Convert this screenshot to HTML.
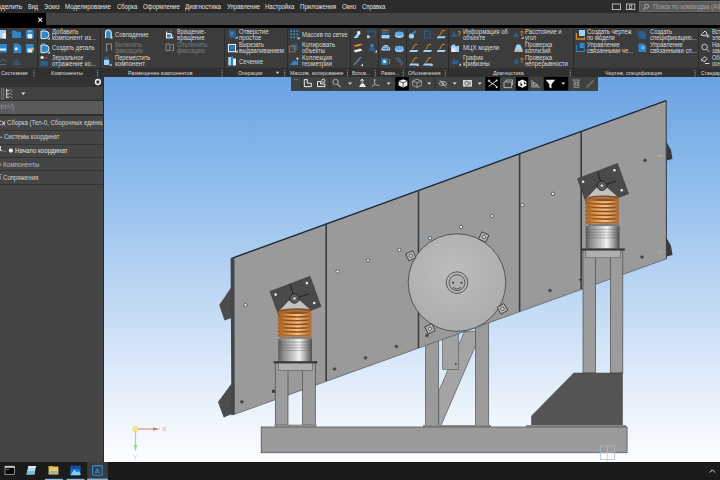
<!DOCTYPE html>
<html><head><meta charset="utf-8">
<style>
html,body{margin:0;padding:0;background:#000;}
body{width:720px;height:480px;position:relative;overflow:hidden;font-family:"Liberation Sans",sans-serif;color:#e8e8e8;}
.abs{position:absolute;}
.t{position:absolute;white-space:nowrap;line-height:1.15;transform-origin:0 50%;}
#menubar{left:0;top:0;width:720px;height:13.3px;background:#2c2c2c;}
#tabrow{left:0;top:13.3px;width:720px;height:11.5px;background:#444444;}
#tab{left:0;top:13.3px;width:46px;height:12px;background:#000;}
#blackline{left:0;top:24.7px;width:720px;height:2.8px;background:#000;}
#ribbon{left:0;top:27.5px;width:720px;height:40.5px;background:#3c3c3c;}
#riblabels{left:0;top:68px;width:720px;height:9.2px;background:#303030;}
#viewport{left:103px;top:77px;width:617px;height:385px;background:linear-gradient(#6aa2e2 0%,#8cbbec 25.5%,#bed8f4 56.6%,#eef4fc 87.8%,#fcfdff 100%);}
#leftpanel{left:0;top:77px;width:102.5px;height:385px;background:#454545;border-right:1px solid #2a2a2a;}
#taskbar{left:0;top:461.8px;width:720px;height:18.2px;background:#1b1b1b;}
#viewtb{left:291px;top:77px;width:307px;height:13.6px;background:#3e4240;}
#search{left:639.2px;top:1.3px;width:81px;height:11.2px;background:#5a5a5a;box-shadow:inset 0 0 0 0.6px #777;}
.sep{position:absolute;top:27.5px;width:1px;height:49.5px;background:#2a2a2a;}
.prow{position:absolute;left:0;width:102.5px;}
</style></head><body>
<div id="menubar" class="abs"></div>
<div id="tabrow" class="abs"></div>
<div id="tab" class="abs"></div>
<div id="blackline" class="abs"></div>
<div id="ribbon" class="abs"></div>
<div id="riblabels" class="abs"></div>
<div id="search" class="abs"></div>
<div class="sep" style="left:37.2px"></div><div class="sep" style="left:100px"></div><div class="sep" style="left:224px"></div><div class="sep" style="left:287px"></div><div class="sep" style="left:350.3px"></div><div class="sep" style="left:378.3px"></div><div class="sep" style="left:406.3px"></div><div class="sep" style="left:448px"></div><div class="sep" style="left:573px"></div><div class="sep" style="left:697.5px"></div>
<div id="viewport" class="abs"></div>
<svg id="model" class="abs" style="left:0;top:0" width="720" height="480" viewBox="0 0 720 480">
<defs>
<linearGradient id="cup" x1="0" x2="1" y1="0" y2="0">
<stop offset="0" stop-color="#5a5a5a"/><stop offset="0.15" stop-color="#8e8e8e"/><stop offset="0.45" stop-color="#c9c9c9"/><stop offset="0.62" stop-color="#f2f2f2"/><stop offset="0.8" stop-color="#a8a8a8"/><stop offset="1" stop-color="#4e4e4e"/>
</linearGradient>
<linearGradient id="spr" x1="0" x2="1" y1="0" y2="0">
<stop offset="0" stop-color="#a8601f"/><stop offset="0.3" stop-color="#e39a4c"/><stop offset="0.6" stop-color="#f3c08a"/><stop offset="1" stop-color="#b66a25"/>
</linearGradient>
<radialGradient id="disc" cx="0.45" cy="0.4" r="0.7">
<stop offset="0" stop-color="#bdbdbd"/><stop offset="1" stop-color="#aaaaaa"/>
</radialGradient>
<g id="hole"><circle r="1.7" fill="#e6eef8" stroke="#46525e" stroke-width="0.9"/></g>
<g id="bolt"><circle r="1.6" fill="#3a3a3a" stroke="#6e6e6e" stroke-width="0.6"/></g>
<g id="sqb"><rect x="-3.9" y="-3.9" width="7.8" height="7.8" fill="#b4b4b4" stroke="#333" stroke-width="0.8"/><circle r="1.7" fill="#d4d4d4" stroke="#333" stroke-width="0.7"/></g>
<!-- spring assembly; local origin = pivot of left one (294.4,298.5) -->
<g id="assy">
 <polygon points="270,291.5 310,276.25 321,306.5 281,321.75" fill="#4a4a4a" stroke="#2e2e2e" stroke-width="0.5"/>
 <polygon points="289,300.5 299.8,300.5 311.2,310.6 279.6,310.6" fill="#c2c2c2"/>
 <line x1="294.4" y1="298.5" x2="290.2" y2="284.2" stroke="#1c1c1c" stroke-width="0.9"/>
 <line x1="294.4" y1="298.5" x2="309" y2="294" stroke="#1c1c1c" stroke-width="0.9"/>
 <circle cx="294.4" cy="298.5" r="4.7" fill="#606060" stroke="#1c1c1c" stroke-width="0.9"/>
 <circle cx="294.4" cy="298.5" r="1.9" fill="#d0d0d0" stroke="#222" stroke-width="0.7"/>
 <circle cx="275.6" cy="294.6" r="1.3" fill="#e4ecf6"/><circle cx="306.9" cy="283.1" r="1.3" fill="#e4ecf6"/><circle cx="314.2" cy="303" r="1.3" fill="#e4ecf6"/>
 <rect x="281.5" y="310.6" width="29.4" height="27" fill="#a56a34"/>
 <g fill="none" stroke="#8a4c18" stroke-width="1.6"><path d="M280.90000000000003 311.6 A15.2 2.0 0 0 1 311.3 310.8"/><path d="M280.90000000000003 315.35 A15.2 2.0 0 0 1 311.3 314.55"/><path d="M280.90000000000003 319.1 A15.2 2.0 0 0 1 311.3 318.3"/><path d="M280.90000000000003 322.85 A15.2 2.0 0 0 1 311.3 322.05"/><path d="M280.90000000000003 326.6 A15.2 2.0 0 0 1 311.3 325.8"/><path d="M280.90000000000003 330.35 A15.2 2.0 0 0 1 311.3 329.55"/><path d="M280.90000000000003 334.1 A15.2 2.0 0 0 1 311.3 333.3"/></g>
 <g fill="none" stroke="url(#spr)" stroke-width="2.1"><path d="M280.90000000000003 311.6 A15.2 2.0 0 0 0 311.3 313.8"/><path d="M280.90000000000003 315.35 A15.2 2.0 0 0 0 311.3 317.55"/><path d="M280.90000000000003 319.1 A15.2 2.0 0 0 0 311.3 321.3"/><path d="M280.90000000000003 322.85 A15.2 2.0 0 0 0 311.3 325.05"/><path d="M280.90000000000003 326.6 A15.2 2.0 0 0 0 311.3 328.8"/><path d="M280.90000000000003 330.35 A15.2 2.0 0 0 0 311.3 332.55"/><path d="M280.90000000000003 334.1 A15.2 2.0 0 0 0 311.3 336.3"/></g>
 <rect x="280.6" y="336.6" width="30.8" height="2.2" fill="#7d7d7d"/>
 <rect x="278.3" y="338.8" width="33.7" height="22.6" fill="url(#cup)"/>
 <g stroke="#4a4a4a" stroke-width="0.5" opacity="0.65"><line x1="278.3" y1="342.2" x2="312" y2="342.2"/><line x1="278.3" y1="345" x2="312" y2="345"/><line x1="278.3" y1="347.8" x2="312" y2="347.8"/><line x1="278.3" y1="350.6" x2="312" y2="350.6"/></g>
 <rect x="273.5" y="361.2" width="43.8" height="2.2" fill="#383838"/>
 <rect x="278.3" y="363.2" width="34.4" height="7.4" fill="#b0b0b0" stroke="#5a5a5a" stroke-width="0.6"/>
</g>
</defs>

<!-- back legs / columns behind plate -->
<!-- left stand legs -->
<!-- center frame -->
<g stroke="#50555a" stroke-width="0.7">
 <rect x="425.5" y="330" width="13.2" height="95.5" fill="#9b9b9b"/>
 <polygon points="464.3,332 475.5,331 475.5,345.5 441,425.5 438.7,425.5 438.7,391.5" fill="#a4a4a4"/>
 <rect x="475.5" y="318" width="13.2" height="107.5" fill="#9b9b9b"/>
</g>
<rect x="442.5" y="330" width="16.2" height="39.5" fill="#a2a2a2" stroke="#555" stroke-width="0.6"/>
<circle cx="445.8" cy="363.8" r="1.1" fill="#eee" stroke="#444" stroke-width="0.4"/><circle cx="455.8" cy="363.8" r="1.1" fill="#555"/>

<!-- flaps -->
<polygon points="231.5,287 219.2,305 224.5,320.5 231.5,318" fill="#4c4c4c"/>
<polygon points="231.5,383.5 218,402 223.7,417.6 234.3,413" fill="#4c4c4c"/>

<!-- main plate -->
<polygon points="231,258.6 666.2,100.6 666.4,258.8 233.8,414.6" fill="#9a9a9a"/>
<polyline points="233.8,414.6 666.4,258.8" fill="none" stroke="#5c6268" stroke-width="0.8"/>
<polyline points="231,258.6 666.2,100.6" fill="none" stroke="#1f2a37" stroke-width="1.5"/>
<!-- left dark edge band -->
<polygon points="230.6,258.8 234.4,257.4 234.8,414.2 231.4,415.4" fill="#41464b"/>
<!-- right dark edge -->
<line x1="666.2" y1="100.6" x2="666.4" y2="258.8" stroke="#2e3840" stroke-width="1"/>
<!-- seams -->
<g stroke="#363c43" stroke-width="1.6">
 <line x1="326.2" y1="223.8" x2="326.2" y2="381"/>
 <line x1="418.5" y1="190.3" x2="418.5" y2="348"/>
 <line x1="519.6" y1="153.6" x2="519.6" y2="311.5"/>
 <line x1="581.2" y1="131.3" x2="581.2" y2="289.3"/>
</g>
<!-- right side hinges -->
<polygon points="666.5,142 671,150 672.5,159 666.5,160.5" fill="#3a3a3a"/>
<polygon points="666.5,237.5 671,246 672.5,255 666.5,256.5" fill="#3a3a3a"/>
<ellipse cx="660.5" cy="155.5" rx="3" ry="1.6" fill="#c9a98a" opacity="0.6"/>
<ellipse cx="660.5" cy="251.5" rx="3" ry="1.4" fill="#b9a593" opacity="0.4"/>

<!-- holes -->
<use href="#hole" x="245.5" y="305"/>
<use href="#hole" x="368" y="260.3"/>
<use href="#hole" x="337.5" y="271.5"/>
<use href="#hole" x="399.5" y="250"/>
<use href="#hole" x="430" y="238.2"/>
<use href="#hole" x="461" y="227"/>
<use href="#hole" x="491.8" y="216"/>
<use href="#hole" x="522.4" y="205"/>
<use href="#hole" x="553" y="193.8"/>
<!-- bolts -->
<use href="#bolt" x="241.8" y="401.8"/>
<use href="#bolt" x="645" y="160.3"/>
<use href="#bolt" x="642" y="257"/>
<use href="#bolt" x="550" y="290.5"/>
<use href="#bolt" x="580.8" y="279.5"/>
<use href="#bolt" x="365.5" y="357.8"/>
<use href="#bolt" x="334.5" y="369"/>
<use href="#bolt" x="396.5" y="346.5"/>
<use href="#bolt" x="427" y="335.5"/>

<!-- disc -->
<circle cx="457" cy="282.6" r="48.8" fill="url(#disc)" stroke="#3a3f44" stroke-width="0.8"/>
<circle cx="457" cy="282.6" r="10.8" fill="none" stroke="#3a3a3a" stroke-width="0.8"/>
<circle cx="457" cy="282.6" r="8" fill="#b0b0b0" stroke="#3a3a3a" stroke-width="0.8"/>
<circle cx="453" cy="282.8" r="1" fill="#333"/><circle cx="461.5" cy="282.8" r="1" fill="#333"/>
<path d="M453 287.5 Q457 290.5 461 287.5" fill="none" stroke="#333" stroke-width="0.7"/>
<use href="#sqb" transform="translate(410.8,255.8) rotate(-25)"/>
<use href="#sqb" transform="translate(483.8,237) rotate(25)"/>
<use href="#sqb" transform="translate(502.5,308.8) rotate(-30)"/>
<use href="#sqb" transform="translate(430,328.8) rotate(-25)"/>

<!-- stand legs (in front of plate) -->
<g fill="#9c9c9c" stroke="#4a4a4a" stroke-width="0.7">
 <rect x="275.3" y="363" width="12.7" height="62"/>
 <rect x="302.6" y="363" width="12.7" height="62"/>
 <rect x="583" y="250.4" width="12.6" height="122.6"/>
 <rect x="610.4" y="250.4" width="12.4" height="122.6"/>
</g>
<rect x="274.4" y="424.6" width="42.2" height="2.2" fill="#8c8c8c"/>
<rect x="272" y="389.8" width="3" height="3" fill="#3a3a3a"/>
<!-- spring assemblies -->
<use href="#assy"/>
<use href="#assy" transform="translate(307.5,-112.8)"/>

<!-- dark block -->
<polygon points="573.8,373 622.5,373 622.5,425.8 531.5,425.8 531.5,416" fill="#545454" stroke="#3e3e3e" stroke-width="0.5"/>
<!-- foot plates -->
<rect x="423" y="425" width="68" height="2" fill="#8a8a8a"/>
<rect x="526" y="425" width="100" height="2" fill="#8a8a8a"/>
<!-- base beam -->
<rect x="261.2" y="427" width="365.9" height="25.7" fill="#9a9a9a" stroke="#50555a" stroke-width="0.8"/>

<!-- axes -->
<line x1="136" y1="429" x2="155" y2="429" stroke="#d98f8f" stroke-width="1.2"/>
<polygon points="153,427.2 160,429 153,430.8" fill="#cf7f7f"/>
<line x1="135.5" y1="431" x2="135.5" y2="446" stroke="#a6d6a0" stroke-width="1.2"/>
<polygon points="133.8,445 137.2,445 135.5,451.5" fill="#9fc79a"/>
<circle cx="135.4" cy="429" r="2.6" fill="#eee98a" stroke="#d8d25a" stroke-width="0.6"/>
<text x="162.2" y="431.2" font-size="6" fill="#d99a9a" font-family="Liberation Sans, sans-serif">X</text>
<text x="133.6" y="459" font-size="6" fill="#b9cdb6" font-family="Liberation Sans, sans-serif">Y</text>
<!-- small origin marker bottom right -->
<rect x="600.3" y="446" width="14.3" height="13.5" fill="none" stroke="#a9bccf" stroke-width="0.8"/>
<line x1="607.2" y1="447" x2="607.2" y2="462" stroke="#d9c779" stroke-width="0.7"/>
<line x1="601" y1="452.6" x2="614" y2="452.6" stroke="#c9d7e4" stroke-width="0.5"/>
</svg>


<div id="leftpanel" class="abs"></div>
<div class="prow" style="top:77.2px;height:9.6px;background:#323232"></div>
<div class="prow" style="top:86.8px;height:13.2px;background:#424242"></div>
<div class="prow" style="top:100px;height:0.8px;background:#2c2c2c"></div>
<div class="prow" style="top:100.8px;height:13.2px;background:#5b5b5b"></div>
<div class="prow" style="top:114px;height:1.6px;background:#2e2e2e"></div>
<div class="prow" style="top:130px;height:0.8px;background:#333"></div>
<div class="prow" style="top:143.5px;height:0.8px;background:#333"></div>
<div class="prow" style="top:156.5px;height:0.8px;background:#333"></div>
<div class="prow" style="top:170.3px;height:0.8px;background:#333"></div>
<div class="prow" style="top:184px;height:0.8px;background:#333"></div>
<div id="viewtb" class="abs"></div>
<div id="taskbar" class="abs"></div>
<span class="t" style="left:-8.5px;top:3.29px;font-size:6.4px;color:#e4e4e4;transform:scaleX(1.0243)">Выделить</span>
<span class="t" style="left:28px;top:3.29px;font-size:6.4px;color:#e4e4e4;transform:scaleX(0.8649)">Вид</span>
<span class="t" style="left:43.7px;top:3.29px;font-size:6.4px;color:#e4e4e4;transform:scaleX(0.9068)">Эскиз</span>
<span class="t" style="left:65px;top:3.29px;font-size:6.4px;color:#e4e4e4;transform:scaleX(0.9576)">Моделирование</span>
<span class="t" style="left:116.7px;top:3.29px;font-size:6.4px;color:#e4e4e4;transform:scaleX(0.9280)">Сборка</span>
<span class="t" style="left:143px;top:3.29px;font-size:6.4px;color:#e4e4e4;transform:scaleX(0.9251)">Оформление</span>
<span class="t" style="left:185px;top:3.29px;font-size:6.4px;color:#e4e4e4;transform:scaleX(0.9713)">Диагностика</span>
<span class="t" style="left:226.7px;top:3.29px;font-size:6.4px;color:#e4e4e4;transform:scaleX(0.9288)">Управление</span>
<span class="t" style="left:265px;top:3.29px;font-size:6.4px;color:#e4e4e4;transform:scaleX(0.9279)">Настройка</span>
<span class="t" style="left:299.7px;top:3.29px;font-size:6.4px;color:#e4e4e4;transform:scaleX(0.9655)">Приложения</span>
<span class="t" style="left:341.7px;top:3.29px;font-size:6.4px;color:#e4e4e4;transform:scaleX(0.9489)">Окно</span>
<span class="t" style="left:361.7px;top:3.29px;font-size:6.4px;color:#e4e4e4;transform:scaleX(0.9291)">Справка</span>
<span class="t" style="left:652.5px;top:3.29px;font-size:6.4px;color:#a2a2a2;transform:scaleX(0.9732)">Поиск по командам (Alt+/)</span>
<span class="t" style="left:51.7px;top:27.79px;font-size:6.4px;color:#dadada;transform:scaleX(0.9310)">Добавить</span>
<span class="t" style="left:51.7px;top:33.69px;font-size:6.4px;color:#dadada;transform:scaleX(0.9803)">компонент из...</span>
<span class="t" style="left:51.7px;top:44.29px;font-size:6.4px;color:#dadada;transform:scaleX(0.9118)">Создать деталь</span>
<span class="t" style="left:51.7px;top:54.49px;font-size:6.4px;color:#dadada;transform:scaleX(0.8903)">Зеркальное</span>
<span class="t" style="left:51.7px;top:60.39px;font-size:6.4px;color:#dadada;transform:scaleX(0.9699)">отражение ко...</span>
<span class="t" style="left:114.7px;top:30.99px;font-size:6.4px;color:#dadada;transform:scaleX(0.9202)">Совпадение</span>
<span class="t" style="left:114.7px;top:40.89px;font-size:6.4px;color:#7d7d7d;transform:scaleX(0.9417)">Включить</span>
<span class="t" style="left:114.7px;top:46.79px;font-size:6.4px;color:#7d7d7d;transform:scaleX(0.9124)">фиксацию</span>
<span class="t" style="left:114.7px;top:54.49px;font-size:6.4px;color:#dadada;transform:scaleX(0.9015)">Переместить</span>
<span class="t" style="left:114.7px;top:60.39px;font-size:6.4px;color:#dadada;transform:scaleX(0.9562)">компонент</span>
<span class="t" style="left:177px;top:27.79px;font-size:6.4px;color:#dadada;transform:scaleX(0.8752)">Вращение-</span>
<span class="t" style="left:177px;top:33.69px;font-size:6.4px;color:#dadada;transform:scaleX(0.9262)">вращение</span>
<span class="t" style="left:177px;top:40.89px;font-size:6.4px;color:#7d7d7d;transform:scaleX(0.9439)">Отключить</span>
<span class="t" style="left:177px;top:46.79px;font-size:6.4px;color:#7d7d7d;transform:scaleX(0.9190)">фиксацию</span>
<span class="t" style="left:239.2px;top:27.79px;font-size:6.4px;color:#dadada;transform:scaleX(0.9342)">Отверстие</span>
<span class="t" style="left:239.2px;top:33.69px;font-size:6.4px;color:#dadada;transform:scaleX(0.9480)">простое</span>
<span class="t" style="left:239.2px;top:40.89px;font-size:6.4px;color:#dadada;transform:scaleX(0.8791)">Вырезать</span>
<span class="t" style="left:239.2px;top:46.79px;font-size:6.4px;color:#dadada;transform:scaleX(0.9424)">выдавливанием</span>
<span class="t" style="left:239.2px;top:57.59px;font-size:6.4px;color:#dadada;transform:scaleX(0.9451)">Сечение</span>
<span class="t" style="left:302px;top:30.99px;font-size:6.4px;color:#dadada;transform:scaleX(0.9330)">Массив по сетке</span>
<span class="t" style="left:302px;top:40.89px;font-size:6.4px;color:#dadada;transform:scaleX(0.9674)">Копировать</span>
<span class="t" style="left:302px;top:46.79px;font-size:6.4px;color:#dadada;transform:scaleX(0.9217)">объекты</span>
<span class="t" style="left:302px;top:54.49px;font-size:6.4px;color:#dadada;transform:scaleX(0.9481)">Коллекция</span>
<span class="t" style="left:302px;top:60.39px;font-size:6.4px;color:#dadada;transform:scaleX(0.9786)">геометрии</span>
<span class="t" style="left:462.5px;top:27.79px;font-size:6.4px;color:#dadada;transform:scaleX(0.9351)">Информация об</span>
<span class="t" style="left:462.5px;top:33.69px;font-size:6.4px;color:#dadada;transform:scaleX(0.9317)">объекте</span>
<span class="t" style="left:462.5px;top:44.29px;font-size:6.4px;color:#dadada;transform:scaleX(0.9460)">МЦХ модели</span>
<span class="t" style="left:462.5px;top:54.49px;font-size:6.4px;color:#dadada;transform:scaleX(0.9156)">График</span>
<span class="t" style="left:462.5px;top:60.39px;font-size:6.4px;color:#dadada;transform:scaleX(0.9557)">кривизны</span>
<span class="t" style="left:524.7px;top:27.79px;font-size:6.4px;color:#dadada;transform:scaleX(0.9179)">Расстояние и</span>
<span class="t" style="left:524.7px;top:33.69px;font-size:6.4px;color:#dadada;transform:scaleX(0.8858)">угол</span>
<span class="t" style="left:524.7px;top:40.89px;font-size:6.4px;color:#dadada;transform:scaleX(0.9432)">Проверка</span>
<span class="t" style="left:524.7px;top:46.79px;font-size:6.4px;color:#dadada;transform:scaleX(0.9346)">коллизий</span>
<span class="t" style="left:524.7px;top:54.49px;font-size:6.4px;color:#dadada;transform:scaleX(0.9432)">Проверка</span>
<span class="t" style="left:524.7px;top:60.39px;font-size:6.4px;color:#dadada;transform:scaleX(0.9308)">непрерывности</span>
<span class="t" style="left:587.2px;top:27.79px;font-size:6.4px;color:#dadada;transform:scaleX(0.9471)">Создать чертеж</span>
<span class="t" style="left:587.2px;top:33.69px;font-size:6.4px;color:#dadada;transform:scaleX(0.8977)">по модели</span>
<span class="t" style="left:587.2px;top:40.89px;font-size:6.4px;color:#dadada;transform:scaleX(0.9231)">Управление</span>
<span class="t" style="left:587.2px;top:46.79px;font-size:6.4px;color:#dadada;transform:scaleX(0.9206)">связанными че...</span>
<span class="t" style="left:649.7px;top:27.79px;font-size:6.4px;color:#dadada;transform:scaleX(0.9055)">Создать</span>
<span class="t" style="left:649.7px;top:33.69px;font-size:6.4px;color:#dadada;transform:scaleX(0.9300)">спецификацию...</span>
<span class="t" style="left:649.7px;top:40.89px;font-size:6.4px;color:#dadada;transform:scaleX(0.9231)">Управление</span>
<span class="t" style="left:649.7px;top:46.79px;font-size:6.4px;color:#dadada;transform:scaleX(0.9349)">связанными сп...</span>
<span class="t" style="left:712px;top:27.79px;font-size:6.4px;color:#dadada;transform:scaleX(0.8858)">Вставить</span>
<span class="t" style="left:712px;top:33.69px;font-size:6.4px;color:#dadada;transform:scaleX(0.8866)">элемент</span>
<span class="t" style="left:712px;top:40.89px;font-size:6.4px;color:#dadada;transform:scaleX(0.8901)">Найти и</span>
<span class="t" style="left:712px;top:46.79px;font-size:6.4px;color:#dadada;transform:scaleX(0.8634)">заменить</span>
<span class="t" style="left:712px;top:54.49px;font-size:6.4px;color:#dadada;transform:scaleX(0.8639)">Обновить</span>
<span class="t" style="left:712px;top:60.39px;font-size:6.4px;color:#dadada;transform:scaleX(0.8649)">основные</span>
<span class="t" style="left:0.8px;top:69.55px;font-size:5.6px;color:#dcdcdc;transform:scaleX(0.9317)">Системная</span>
<span class="t" style="left:50.8px;top:69.55px;font-size:5.6px;color:#dcdcdc;transform:scaleX(0.9834)">Компоненты</span>
<span class="t" style="left:128px;top:69.55px;font-size:5.6px;color:#dcdcdc;transform:scaleX(0.9468)">Размещение компонентов</span>
<span class="t" style="left:237.5px;top:69.55px;font-size:5.6px;color:#dcdcdc;transform:scaleX(0.9361)">Операции</span>
<span class="t" style="left:289.7px;top:69.55px;font-size:5.6px;color:#dcdcdc;transform:scaleX(0.9574)">Массив, копирование</span>
<span class="t" style="left:352px;top:69.55px;font-size:5.6px;color:#dcdcdc;transform:scaleX(0.8496)">Вспом...</span>
<span class="t" style="left:380.8px;top:69.55px;font-size:5.6px;color:#dcdcdc;transform:scaleX(0.8854)">Разме...</span>
<span class="t" style="left:408.3px;top:69.55px;font-size:5.6px;color:#dcdcdc;transform:scaleX(0.9416)">Обозначения</span>
<span class="t" style="left:492.5px;top:69.55px;font-size:5.6px;color:#dcdcdc;transform:scaleX(0.9495)">Диагностика</span>
<span class="t" style="left:605px;top:69.55px;font-size:5.6px;color:#dcdcdc;transform:scaleX(0.9458)">Чертеж, спецификация</span>
<span class="t" style="left:700.8px;top:69.55px;font-size:5.6px;color:#dcdcdc;transform:scaleX(0.8885)">Стандартные изделия</span>
<div class="abs" style="left:0;top:0;width:102.5px;height:480px;overflow:hidden">
<span class="t" style="left:-27.5px;top:103.47px;font-size:6.6px;color:#9a9a9a;transform:scaleX(1.0139)">Поиск (Ctrl+/)</span>
<span class="t" style="left:6.7px;top:119.37px;font-size:6.6px;color:#d4d4d4;transform:scaleX(0.9229)">Сборка (Тел-0, Сборочных единиц-4, Деталей-12)</span>
<span class="t" style="left:3.7px;top:133.17px;font-size:6.6px;color:#d4d4d4;transform:scaleX(0.9101)">Системы координат</span>
<span class="t" style="left:15px;top:146.77px;font-size:6.6px;color:#e4e4e4;transform:scaleX(0.9318)">Начало координат</span>
<span class="t" style="left:3px;top:160.67px;font-size:6.6px;color:#bdbdbd;transform:scaleX(0.9526)">Компоненты</span>
<span class="t" style="left:3px;top:174.17px;font-size:6.6px;color:#d4d4d4;transform:scaleX(0.9255)">Сопряжения</span>
</div>
<svg class="abs" style="left:0;top:0" width="720" height="480" viewBox="0 0 720 480">
<path d="M38.3 17.8 L42.1 21.6 M42.1 17.8 L38.3 21.6" stroke="#ececec" stroke-width="1.2" fill="none"/>
<rect x="612.3" y="4" width="8.3" height="5.6" fill="none" stroke="#d8d8d8" stroke-width="0.8"/>
<rect x="626.5" y="4" width="8.3" height="5.6" fill="none" stroke="#d8d8d8" stroke-width="0.8"/>
<rect x="629.4" y="5.2" width="2.4" height="3.4" fill="none" stroke="#d8d8d8" stroke-width="0.7"/>
<circle cx="646.6" cy="6.2" r="2" fill="none" stroke="#c4c4c4" stroke-width="0.7"/><line x1="645.2" y1="7.8" x2="643.2" y2="9.8" stroke="#c4c4c4" stroke-width="0.8"/>
<rect x="-1" y="30" width="7" height="8.5" fill="#9fd2f6"/><rect x="2.5" y="33" width="3.5" height="5.5" fill="#e8eef4"/>
<path d="M12.2 30.5 h3.5 l1 1.2 h4.3 v6.3 h-8.8z" fill="#2f86c8"/>
<rect x="26" y="30" width="7.6" height="8.5" fill="#2f86c8"/><rect x="27.6" y="34" width="4.6" height="4.5" fill="#dfeaf5"/><rect x="28" y="30" width="3.6" height="2.2" fill="#6fb2e4"/>
<rect x="-1" y="44" width="8" height="8.5" fill="#2f86c8"/><rect x="0" y="48.5" width="6" height="2" fill="#e8eef4"/>
<path d="M13.5 43.5 h5 l2.8 2.8 v6.7 h-7.8z" fill="#2f86c8"/><circle cx="16.2" cy="48.8" r="1.5" fill="#e8eef4"/>
<rect x="26" y="44" width="7.6" height="8.5" fill="#2f86c8"/><rect x="27.6" y="48.5" width="4.6" height="4" fill="#dfeaf5"/><rect x="31.4" y="47.6" width="2.4" height="2.4" fill="#d9b45a"/>
<path d="M0 62 l3-3 l3 3 M0 64.5 h6" stroke="#566f86" stroke-width="1" fill="none"/>
<path d="M13 63.5 l3.5-4.5 l3.5 4.5z" fill="#2a5f8e" opacity="0.8"/><rect x="13" y="63.5" width="7" height="1.5" fill="#2a5f8e" opacity="0.8"/>
<rect x="33.5" y="70.1" width="1" height="1" fill="#9a9a9a"/>
<rect x="33.5" y="71.9" width="1" height="1" fill="#9a9a9a"/>
<rect x="33.5" y="73.7" width="1" height="1" fill="#9a9a9a"/>
<rect x="33.5" y="75.5" width="1" height="1" fill="#9a9a9a"/>
<path d="M41 31 h4.2 a3.8 3.8 0 0 1 0 7.6 h-4.2z" fill="#2f86c8" stroke="#e8eef4" stroke-width="1"/>
<path d="M41.5 29.4 h4" stroke="#2f86c8" stroke-width="1"/>
<polygon points="50,39.6 47.6,39.6 50,37.2" fill="#e6e6e6"/>
<path d="M41 45 h4.2 a3.8 3.8 0 0 1 0 7.6 h-4.2z" fill="#2f86c8" stroke="#e8eef4" stroke-width="1"/>
<path d="M41.5 43.4 h4" stroke="#2f86c8" stroke-width="1"/>
<polygon points="50,53.4 47.6,53.4 50,51.0" fill="#e6e6e6"/>
<rect x="40.6" y="56.2" width="3" height="2.6" fill="#e8eef4"/><circle cx="46.3" cy="57.6" r="0.9" fill="#b55"/>
<path d="M40.5 61 h3.5 a2.5 2.5 0 0 1 0 5 h-3.5z" fill="#2a5f8e"/><path d="M46 61 h2 v5 h-2z" fill="#2a5f8e"/>
<rect x="97.0" y="70.1" width="1" height="1" fill="#9a9a9a"/>
<rect x="97.0" y="71.9" width="1" height="1" fill="#9a9a9a"/>
<rect x="97.0" y="73.7" width="1" height="1" fill="#9a9a9a"/>
<rect x="97.0" y="75.5" width="1" height="1" fill="#9a9a9a"/>
<path d="M105.6 38 v-5.2 a2.8 2.8 0 0 1 5.6 0 v5.2" fill="#2f86c8" stroke="#e8eef4" stroke-width="1.1"/>
<polygon points="112.4,38.6 110.0,38.6 112.4,36.2" fill="#e6e6e6"/>
<path d="M106.5 50 v-6 h5 v6 M105.5 50.8 h2.4" fill="none" stroke="#8a8a8a" stroke-width="1.1"/>
<rect x="104" y="59.6" width="5.2" height="5.4" fill="#9fd2f6"/><rect x="104.6" y="56.5" width="4" height="2" fill="#2a5f8e"/>
<polygon points="111.6,65.8 109.19999999999999,65.8 111.6,63.4" fill="#e6e6e6"/>
<path d="M166.5 31.5 v6.5 h3 a2.2 2.2 0 0 0 0-4.4 h-3" fill="#2f86c8" stroke="#e8eef4" stroke-width="1.1"/><path d="M169 31 a2.5 2.5 0 0 1 3 1.2" stroke="#2f86c8" stroke-width="0.9" fill="none"/>
<polygon points="173.2,38.6 170.79999999999998,38.6 173.2,36.2" fill="#e6e6e6"/>
<path d="M166 44 h4 v6.5 h-4z M171.5 44.5 h2 v6 h-2" fill="none" stroke="#8a8a8a" stroke-width="1"/>
<rect x="221.5" y="70.1" width="1" height="1" fill="#9a9a9a"/>
<rect x="221.5" y="71.9" width="1" height="1" fill="#9a9a9a"/>
<rect x="221.5" y="73.7" width="1" height="1" fill="#9a9a9a"/>
<rect x="221.5" y="75.5" width="1" height="1" fill="#9a9a9a"/>
<path d="M229 30 h5 l2 2 v6 h-7z" fill="#2a5f8e"/><rect x="230.5" y="32" width="3" height="3.5" fill="#3f7fb5"/>
<polygon points="237.6,38.6 235.2,38.6 237.6,36.2" fill="#e6e6e6"/>
<rect x="228.5" y="44.5" width="7" height="7.2" fill="#2a5f8e" stroke="#e8eef4" stroke-width="1.1"/><rect x="230.3" y="46.2" width="3.4" height="3.2" fill="#2f86c8"/>
<polygon points="237.6,52.4 235.2,52.4 237.6,50.0" fill="#e6e6e6"/>
<rect x="228.2" y="57" width="3" height="8.5" fill="#9fd2f6"/><rect x="231.2" y="56.2" width="1.8" height="9.3" fill="#2f86c8"/><rect x="233" y="58.5" width="3" height="7" fill="#e8eef4"/>
<polygon points="275.6,71.8 279.4,71.8 277.5,74" fill="#c8c8c8"/>
<rect x="284.2" y="70.1" width="1" height="1" fill="#9a9a9a"/>
<rect x="284.2" y="71.9" width="1" height="1" fill="#9a9a9a"/>
<rect x="284.2" y="73.7" width="1" height="1" fill="#9a9a9a"/>
<rect x="284.2" y="75.5" width="1" height="1" fill="#9a9a9a"/>
<rect x="290.2" y="30.2" width="1.9" height="1.9" fill="#2f86c8"/>
<rect x="290.2" y="33.3" width="1.9" height="1.9" fill="#2f86c8"/>
<rect x="290.2" y="36.4" width="1.9" height="1.9" fill="#2f86c8"/>
<rect x="293.3" y="30.2" width="1.9" height="1.9" fill="#2f86c8"/>
<rect x="293.3" y="33.3" width="1.9" height="1.9" fill="#2f86c8"/>
<rect x="293.3" y="36.4" width="1.9" height="1.9" fill="#2f86c8"/>
<rect x="296.4" y="30.2" width="1.9" height="1.9" fill="#2f86c8"/>
<rect x="296.4" y="33.3" width="1.9" height="1.9" fill="#2f86c8"/>
<rect x="296.4" y="36.4" width="1.9" height="1.9" fill="#2f86c8"/>
<polygon points="299.6,39.2 297.20000000000005,39.2 299.6,36.800000000000004" fill="#e6e6e6"/>
<rect x="291.5" y="44" width="6" height="6" fill="#2a5f8e"/><rect x="289.4" y="46.2" width="5.6" height="5.6" fill="none" stroke="#a8692e" stroke-width="1.1"/>
<path d="M290 65 l4-5 l2.5 2 l1.5-3 v6z" fill="#2f86c8"/><circle cx="297.4" cy="58.6" r="1.1" fill="#e8eef4"/>
<rect x="347.0" y="70.1" width="1" height="1" fill="#9a9a9a"/>
<rect x="347.0" y="71.9" width="1" height="1" fill="#9a9a9a"/>
<rect x="347.0" y="73.7" width="1" height="1" fill="#9a9a9a"/>
<rect x="347.0" y="75.5" width="1" height="1" fill="#9a9a9a"/>
<path d="M353.5 38 l5.5-6.5 l1.5 1.5 l-3 5z" fill="#9fd2f6"/><rect x="357.2" y="31.2" width="3" height="3" fill="#e8eef4"/>
<path d="M368 31 h7 v6 h-7z" fill="none" stroke="#2a5f8e" stroke-width="1"/><rect x="367" y="35.5" width="2.6" height="2.6" fill="#e8eef4" opacity="0.8"/>
<polygon points="353.5,45.5 360.5,43.5 362.5,45 355.5,47" fill="#d98a2b"/><polygon points="353.5,50.5 360.5,48.5 362.5,50.5 355.5,52.5" fill="#e8eef4"/>
<path d="M368 51 l4-6 l4 6z" fill="#2a5f8e"/><rect x="370.5" y="44" width="3" height="3" fill="#2f86c8"/>
<polygon points="377,52.4 374.6,52.4 377,50.0" fill="#e6e6e6"/>
<path d="M354 65 l7-8" stroke="#6d88a0" stroke-width="1.2"/>
<polygon points="363,66 360.6,66 363,63.6" fill="#e6e6e6"/>
<rect x="374.8" y="70.1" width="1" height="1" fill="#9a9a9a"/>
<rect x="374.8" y="71.9" width="1" height="1" fill="#9a9a9a"/>
<rect x="374.8" y="73.7" width="1" height="1" fill="#9a9a9a"/>
<rect x="374.8" y="75.5" width="1" height="1" fill="#9a9a9a"/>
<rect x="381.5" y="35" width="8" height="3.4" fill="#9fd2f6"/><rect x="382" y="31.4" width="7" height="3" fill="#2a5f8e"/><path d="M382 30.2 h7" stroke="#d98a2b" stroke-width="0.8"/>
<ellipse cx="399.3" cy="35.3" rx="4.4" ry="2.6" fill="#9fd2f6"/><ellipse cx="399.3" cy="33.8" rx="4.4" ry="2.2" fill="#5fa9e0"/>
<path d="M381.8 50 a4 4.5 0 0 1 8 0z" fill="#2f86c8" stroke="#e8eef4" stroke-width="0.9"/><path d="M384 48.5 l1.8-2 l1.8 2" stroke="#e8eef4" stroke-width="0.8" fill="none"/>
<ellipse cx="399.3" cy="49.5" rx="4.4" ry="2.6" fill="#9fd2f6"/><ellipse cx="399.3" cy="48" rx="4.4" ry="2.2" fill="#5fa9e0"/>
<rect x="381.5" y="58.4" width="6" height="6.4" fill="#2f86c8"/><circle cx="384.5" cy="61.6" r="1.5" fill="#e8eef4"/><path d="M389.3 59 v5" stroke="#d98a2b" stroke-width="0.8"/>
<path d="M396 58 l6 7 M398 57.5 l5 6" stroke="#6d88a0" stroke-width="0.9"/>
<rect x="402.8" y="70.1" width="1" height="1" fill="#9a9a9a"/>
<rect x="402.8" y="71.9" width="1" height="1" fill="#9a9a9a"/>
<rect x="402.8" y="73.7" width="1" height="1" fill="#9a9a9a"/>
<rect x="402.8" y="75.5" width="1" height="1" fill="#9a9a9a"/>
<circle cx="411.5" cy="36" r="2.6" fill="#9fd2f6"/><path d="M412 34 l4-3" stroke="#2f86c8" stroke-width="2"/>
<rect x="424.5" y="31" width="5.5" height="7" fill="none" stroke="#2a5f8e" stroke-width="1.1"/>
<polygon points="436.5,38.2 444.5,38.2 445.9,36.2 437.9,36.2" fill="#9fd2f6"/><path d="M439.5 35.6 l3-5 h2.4" stroke="#d98a2b" stroke-width="1" fill="none"/>
<polygon points="409,52.0 417,52.0 418.4,50.0 410.4,50.0" fill="#9fd2f6"/><path d="M412 49.4 l3-5 h2.4" stroke="#d98a2b" stroke-width="1" fill="none"/>
<polygon points="422.8,52.0 430.8,52.0 432.2,50.0 424.2,50.0" fill="#9fd2f6"/><path d="M425.8 49.4 l3-5 h2.4" stroke="#d98a2b" stroke-width="1" fill="none"/>
<polygon points="436.5,52.0 444.5,52.0 445.9,50.0 437.9,50.0" fill="#9fd2f6"/><path d="M439.5 49.4 l3-5 h2.4" stroke="#d98a2b" stroke-width="1" fill="none"/>
<polygon points="409,65.39999999999999 417,65.39999999999999 418.4,63.4 410.4,63.4" fill="#9fd2f6"/><path d="M412 62.8 l3-5 h2.4" stroke="#d98a2b" stroke-width="1" fill="none"/>
<polygon points="422.8,65.39999999999999 430.8,65.39999999999999 432.2,63.4 424.2,63.4" fill="#9fd2f6"/><path d="M425.8 62.8 l3-5 h2.4" stroke="#d98a2b" stroke-width="1" fill="none"/>
<polygon points="418.6,66 416.20000000000005,66 418.6,63.6" fill="#e6e6e6"/>
<polygon points="432.6,66 430.20000000000005,66 432.6,63.6" fill="#e6e6e6"/>
<rect x="444.8" y="70.1" width="1" height="1" fill="#9a9a9a"/>
<rect x="444.8" y="71.9" width="1" height="1" fill="#9a9a9a"/>
<rect x="444.8" y="73.7" width="1" height="1" fill="#9a9a9a"/>
<rect x="444.8" y="75.5" width="1" height="1" fill="#9a9a9a"/>
<path d="M451 37 l3-6 l3.5 6z" fill="#2a5f8e"/>
<text x="457" y="36" font-size="6.5" font-weight="bold" fill="#d98a2b" font-family="Liberation Sans, sans-serif">?</text>
<path d="M451 52 v-6 l3-2 l2 2.5 l3-1 v6.5z" fill="#9fd2f6"/><rect x="452" y="48.5" width="3.5" height="3.5" fill="#e8eef4"/>
<path d="M451 64 l3-6 l2 3 l2.5-2 v5z" fill="#2a5f8e"/>
<polygon points="461,65.6 458.6,65.6 461,63.199999999999996" fill="#e6e6e6"/>
<path d="M513 37 l3-5 l3.5 5z" fill="#2a5f8e"/>
<text x="519.6" y="36" font-size="6.5" font-weight="bold" fill="#d98a2b" font-family="Liberation Sans, sans-serif">?</text>
<polygon points="523.6,38.8 521.2,38.8 523.6,36.4" fill="#e6e6e6"/>
<path d="M514.6 50 l2-5.5 h3.6 l2.4 5.5z" fill="#9fd2f6"/><rect x="514.4" y="50" width="8.4" height="2" fill="#c9b28a"/>
<path d="M513.5 63.5 l3-6 l2.5 6z" fill="#2a5f8e"/>
<text x="519.6" y="63.4" font-size="6.5" font-weight="bold" fill="#d98a2b" font-family="Liberation Sans, sans-serif">?</text>
<rect x="569.8" y="70.1" width="1" height="1" fill="#9a9a9a"/>
<rect x="569.8" y="71.9" width="1" height="1" fill="#9a9a9a"/>
<rect x="569.8" y="73.7" width="1" height="1" fill="#9a9a9a"/>
<rect x="569.8" y="75.5" width="1" height="1" fill="#9a9a9a"/>
<path d="M576.4 33 v6 h8 v-2" fill="none" stroke="#d98a2b" stroke-width="1.3"/><rect x="579" y="30" width="6" height="6" fill="#9fd2f6"/>
<path d="M576.4 45 v6.5 h8 v-3" fill="none" stroke="#2f86c8" stroke-width="1.1"/><rect x="579.6" y="43" width="5" height="5" fill="#2f86c8"/>
<path d="M638.5 31 h5 l2.6 2.6 v5.4 h-7.6z" fill="#2a5f8e"/>
<path d="M638.5 43.4 h5 l2.6 2.6 v6 h-7.6z" fill="#2f86c8"/><rect x="641.5" y="46" width="3" height="3" fill="#6fb2e4"/>
<rect x="694.5" y="70.1" width="1" height="1" fill="#9a9a9a"/>
<rect x="694.5" y="71.9" width="1" height="1" fill="#9a9a9a"/>
<rect x="694.5" y="73.7" width="1" height="1" fill="#9a9a9a"/>
<rect x="694.5" y="75.5" width="1" height="1" fill="#9a9a9a"/>
<path d="M701 35 l4-4 l2 2 l-2 3z M706 36 h3.5 M707.8 34.3 v3.5" stroke="#d4d4d4" stroke-width="1" fill="none"/>
<circle cx="704.6" cy="47" r="2.8" fill="none" stroke="#d4d4d4" stroke-width="0.9"/><path d="M706.6 49.2 l2.6 2.6" stroke="#d4d4d4" stroke-width="1"/>
<path d="M701 60 l4-3.4 l2 2 l-2 3z M705 63.5 h4.5" stroke="#d4d4d4" stroke-width="1" fill="none"/>
<rect x="395.2" y="77" width="13.600000000000023" height="13.5" fill="#000"/>
<rect x="485.3" y="77" width="14.699999999999989" height="13.5" fill="#000"/>
<rect x="515.8" y="77" width="12.5" height="13.5" fill="#000"/>
<rect x="543.7" y="77" width="24.59999999999991" height="13.5" fill="#000"/>
<rect x="301.0" y="77.5" width="0.8" height="12.5" fill="#2a2d2c"/>
<rect x="328.90000000000003" y="77.5" width="0.8" height="12.5" fill="#2a2d2c"/>
<rect x="434.3" y="77.5" width="0.8" height="12.5" fill="#2a2d2c"/>
<rect x="294.0" y="79" width="0.8" height="0.8" fill="#999"/>
<rect x="295.5" y="79" width="0.8" height="0.8" fill="#999"/>
<rect x="297.0" y="79" width="0.8" height="0.8" fill="#999"/>
<path d="M304.3 79.6 h3 v3.6 h4 v3.4 h-7z" fill="none" stroke="#ececec" stroke-width="1"/>
<path d="M317.5 86.6 v-5 h3 v2.4 h4.4 v2.6z" fill="none" stroke="#ececec" stroke-width="1"/><circle cx="323.3" cy="80.8" r="1.7" fill="none" stroke="#ececec" stroke-width="0.9"/>
<circle cx="335.6" cy="82" r="2.7" fill="none" stroke="#b4b4b4" stroke-width="0.9"/><path d="M337.6 84.2 l3 3" stroke="#b4b4b4" stroke-width="1.1"/>
<polygon points="348,82.5 352,82.5 350,84.8" fill="#e0e0e0"/>
<path d="M359 87 l2.2-3.4 h2.6 l2.2 3.4z" fill="#ececec"/><path d="M362.1 79 v4 M360.3 81 l1.8-2 l1.8 2" stroke="#ececec" stroke-width="0.9" fill="none"/>
<path d="M374.6 79.5 v5 l-2.8 2.2 M374.6 84.5 l4.6 1.2" stroke="#b4b4b4" stroke-width="0.9" fill="none"/><circle cx="374.6" cy="80" r="0.9" fill="#b4b4b4"/>
<polygon points="386.7,82.5 390.7,82.5 388.7,84.8" fill="#e0e0e0"/>
<path d="M398.6 81 l4.6-1.8 l4.2 1.8 v4.4 l-4.3 2 l-4.5-2z" fill="#ececec"/><path d="M398.6 81 l4.5 1.8 l4.3-1.8 M403.1 82.8 v4.6" stroke="#000" stroke-width="0.6" fill="none"/>
<path d="M412.6 81 l4.6-1.8 l4.2 1.8 v4.4 l-4.3 2 l-4.5-2z M412.6 81 l4.5 1.8 l4.3-1.8 M417.1 82.8 v4.6" stroke="#b4b4b4" stroke-width="0.8" fill="none"/>
<polygon points="427.2,82.5 431.2,82.5 429.2,84.8" fill="#e0e0e0"/>
<path d="M438.6 83.5 q4.3-4.4 8.6 0 q-4.3 4.4 -8.6 0z" fill="none" stroke="#b4b4b4" stroke-width="0.9"/><circle cx="442.9" cy="83.5" r="1.2" fill="#b4b4b4"/><path d="M439.6 80 l7 7.4" stroke="#b4b4b4" stroke-width="0.9"/>
<polygon points="452.7,82.5 456.7,82.5 454.7,84.8" fill="#e0e0e0"/>
<rect x="463" y="80" width="9" height="6.6" fill="#d6d6d6"/><circle cx="466.8" cy="83.3" r="1.9" fill="none" stroke="#444" stroke-width="0.8"/><path d="M470 81.5 v3.6" stroke="#444" stroke-width="0.8"/>
<polygon points="477.7,82.5 481.7,82.5 479.7,84.8" fill="#e0e0e0"/>
<path d="M488.5 81 l7.6 5 M488.5 86.6 l7.6-5.6" stroke="#ececec" stroke-width="0.9"/><circle cx="496.6" cy="80.6" r="1" fill="#ececec"/><circle cx="496.6" cy="87" r="1" fill="#ececec"/><path d="M489 79.4 v2.6 M487.8 80.6 h2.4" stroke="#ececec" stroke-width="0.7"/>
<path d="M504 82 h7.6 v5.6 h-7.6z M506 82 v-2 h6.6 v5" stroke="#b4b4b4" stroke-width="0.9" fill="none"/>
<path d="M518 81.4 l4.4-1.8 l4 1.8 v4.4 l-4.1 2 l-4.3-2z" fill="#ececec"/><path d="M520.5 82 l2 3 l-2 1.6z M524 81.5 v3 l2-1" fill="#222"/>
<path d="M532 87 v-7 M532 87 h8 M533.6 85.4 v-3.4 l4.4 3.4z" stroke="#b4b4b4" stroke-width="0.9" fill="none"/>
<path d="M545.6 79.8 h9.6 l-3.7 4.4 v4.2 l-2.2-1.2 v-3z" fill="#ececec"/>
<polygon points="561.3,82.5 565.3,82.5 563.3,84.8" fill="#e0e0e0"/>
<path d="M572.6 80 h7.6 M574 80 v7.4 h4.8 v-7.4 M575.4 82 h2 v3.4 h-2z" stroke="#9c9c9c" stroke-width="0.9" fill="none"/>
<path d="M586.6 87.4 l7-7" stroke="#6c6c6c" stroke-width="1.8"/>
<circle cx="97.9" cy="82" r="2.4" fill="none" stroke="#f0f0f0" stroke-width="1.5"/>
<rect x="1.2" y="88.6" width="0.9" height="0.9" fill="#bdbdbd"/><rect x="3.1" y="88.6" width="0.9" height="0.9" fill="#bdbdbd"/>
<rect x="1.2" y="90.6" width="0.9" height="0.9" fill="#bdbdbd"/><rect x="3.1" y="90.6" width="0.9" height="0.9" fill="#bdbdbd"/>
<rect x="1.2" y="92.6" width="0.9" height="0.9" fill="#bdbdbd"/><rect x="3.1" y="92.6" width="0.9" height="0.9" fill="#bdbdbd"/>
<rect x="1.2" y="94.6" width="0.9" height="0.9" fill="#bdbdbd"/><rect x="3.1" y="94.6" width="0.9" height="0.9" fill="#bdbdbd"/>
<rect x="1.2" y="96.6" width="0.9" height="0.9" fill="#bdbdbd"/><rect x="3.1" y="96.6" width="0.9" height="0.9" fill="#bdbdbd"/>
<rect x="1.2" y="98.6" width="0.9" height="0.9" fill="#bdbdbd"/><rect x="3.1" y="98.6" width="0.9" height="0.9" fill="#bdbdbd"/>
<path d="M6.6 88.8 v9 M6.6 90.6 h2.4 M6.6 94 h2.4 M6.6 97.4 h2.4" stroke="#e6e6e6" stroke-width="0.9" fill="none"/>
<rect x="9.6" y="89.4" width="1" height="0.9" fill="#cfcfcf"/><rect x="11.3" y="90.60000000000001" width="1" height="0.9" fill="#bbb"/>
<rect x="9.6" y="92.8" width="1" height="0.9" fill="#cfcfcf"/><rect x="11.3" y="94.0" width="1" height="0.9" fill="#bbb"/>
<rect x="9.6" y="96.2" width="1" height="0.9" fill="#cfcfcf"/><rect x="11.3" y="97.4" width="1" height="0.9" fill="#bbb"/>
<polygon points="21.2,92.6 25.4,92.6 23.3,95" fill="#e0e0e0"/>
<path d="M0 121.2 h1.6 M0 124.6 h1.6" stroke="#ddd" stroke-width="0.8"/><path d="M2 121 a2.6 2.6 0 0 1 0 4.6 M5.4 121 a2.6 2.6 0 0 0 0 4.6" stroke="#ddd" stroke-width="0.8" fill="none"/><path d="M2.6 123.3 h2.2 M3.7 122.2 v2.2" stroke="#ddd" stroke-width="0.7"/>
<path d="M0 137.2 h2.2" stroke="#ccc" stroke-width="0.8"/>
<path d="M0.4 146 v4.6 h1.8" stroke="#e0e0e0" stroke-width="1" fill="none"/><path d="M3.4 151.4 h2.6" stroke="#999" stroke-width="0.7"/>
<circle cx="10.9" cy="150.6" r="2.1" fill="#f4f4f4"/>
<path d="M0 163 l1.2 1.6 l-1.2 1.6" stroke="#bbb" stroke-width="0.7" fill="none"/>
<path d="M0.2 174.6 h1.6 M0.2 176.4 v3" stroke="#ddd" stroke-width="0.7" fill="none"/>
<rect x="87.2" y="462" width="20.6" height="18" fill="#3b3b3b"/>
<rect x="87.2" y="478.6" width="20.6" height="1.4" fill="#7fb5e6"/>
<rect x="45" y="478.8" width="18" height="1.2" fill="#8fb9de"/><rect x="66.5" y="478.8" width="18" height="1.2" fill="#8fb9de"/>
<rect x="5" y="466.2" width="9.6" height="8.4" fill="#050505" stroke="#bdbdbd" stroke-width="0.7"/><rect x="5" y="466.2" width="9.6" height="1.6" fill="#d8d8d8"/><path d="M6.2 469.6 h3" stroke="#ccc" stroke-width="0.6"/>
<path d="M28.4 466 h7.6 l-1.6 8.6 h-8z" fill="#a8d8ea"/><path d="M28.4 466 h7.6 l-0.4 2 h-7.6z" fill="#d6eef6"/><path d="M26.4 474.6 l1-3.4 h7.6 l-0.6 3.4z" fill="#79b9d4"/>
<rect x="48.6" y="466.6" width="9.8" height="7.8" fill="#f0c85a"/><rect x="48.6" y="466" width="4.4" height="1.6" fill="#e2a93c"/><rect x="49.8" y="471" width="7.4" height="2.2" fill="#7fb4e6"/><rect x="48.6" y="473.2" width="9.8" height="1.2" fill="#d9a53a"/>
<rect x="70.4" y="465.8" width="10" height="9.4" fill="#1f73c7"/><path d="M70.4 475.2 l4-5.6 l2.6 3 l1.6-1.6 l1.8 2.2 v2z" fill="#7fd0f5"/><rect x="70.4" y="465.8" width="10" height="3" fill="#124e9c"/>
<rect x="92.6" y="465.6" width="9.6" height="9.6" rx="1" fill="none" stroke="#2f8fd8" stroke-width="1.1"/><path d="M95 472.6 l2.4-4.4 l2.4 4.4z" fill="none" stroke="#2f8fd8" stroke-width="0.8"/><circle cx="97.4" cy="471" r="0.9" fill="#2f8fd8"/>
<path d="M709.6 472.6 l2.8-2.8 l2.8 2.8" stroke="#e8e8e8" stroke-width="1" fill="none"/>
</svg>
</body></html>
